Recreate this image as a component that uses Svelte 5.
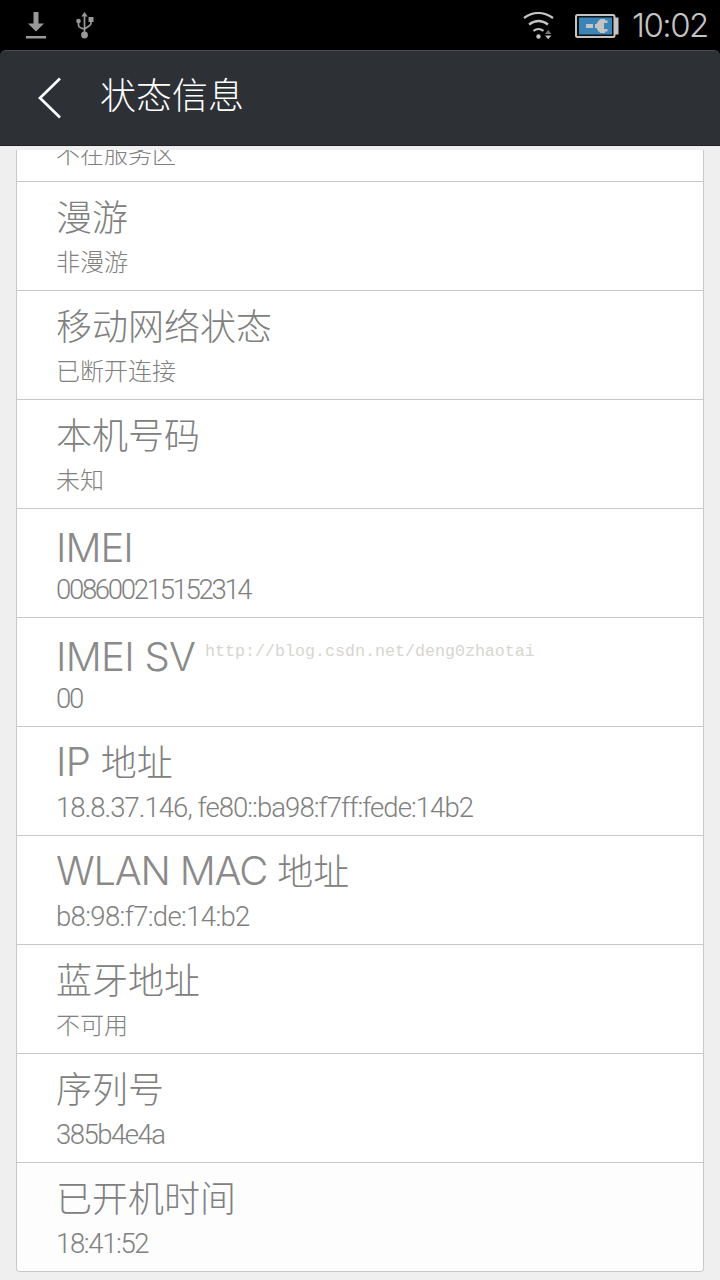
<script lang="ts">
  type Entry = {
    title: string;
    value: string;
    titleSpacing?: number;
    valueSpacing?: number;
  };

  const entries: Entry[] = [
    { title: "漫游", value: "非漫游" },
    { title: "移动网络状态", value: "已断开连接" },
    { title: "本机号码", value: "未知" },
    { title: "IMEI", value: "008600215152314", titleSpacing: -1, valueSpacing: -2.3 },
    { title: "IMEI SV", value: "00", titleSpacing: -0.7, valueSpacing: -2.3 },
    { title: "IP 地址", value: "18.8.37.146, fe80::ba98:f7ff:fede:14b2", titleSpacing: -0.7, valueSpacing: -0.94 },
    { title: "WLAN MAC 地址", value: "b8:98:f7:de:14:b2", titleSpacing: -1.2, valueSpacing: -0.65 },
    { title: "蓝牙地址", value: "不可用" },
    { title: "序列号", value: "385b4e4a", valueSpacing: -1.5 },
    { title: "已开机时间", value: "18:41:52", valueSpacing: -1.35 },
  ];

  // latin runs use a different face and size than the chinese ones
  function split(text: string) {
    return text.match(/[\x20-\x7e]+|[^\x20-\x7e]+/g) ?? [];
  }

  function isLatin(text: string) {
    return /^[\x20-\x7e]+$/.test(text);
  }
</script>

{#snippet runs(text: string, spacing: number)}
  {#each split(text) as part}
    {#if isLatin(part)}
      <span class="latin" style:letter-spacing="{spacing}px">{part}</span>
    {:else}
      <span>{part}</span>
    {/if}
  {/each}
{/snippet}

<div class="screen">
  <div class="statusbar">
    <svg class="download" width="22" height="28" viewBox="0 0 22 28">
      <path d="M8.500 0h5v11.500H19l-8 8-8-8h5.500z" fill="#999" />
      <path d="M1 24h20v2.500H1z" fill="#999" />
    </svg>
    <svg class="usb" width="20" height="28" viewBox="0 0 20 28" fill="none" stroke="#999" stroke-width="1.700">
      <path d="M9.500 3v19M3.500 9v4q0 2 2 2.700l4 1.500M16 8v3q0 2-2 3l-4.500 3" />
      <path d="M9.500 0l3.200 4.500H6.300z" fill="#999" stroke="none" />
      <circle cx="3.500" cy="9" r="2.300" fill="#999" stroke="none" />
      <path d="M13.500 5h5v5h-5z" fill="#999" stroke="none" />
      <circle cx="9.500" cy="23" r="3.400" fill="#999" stroke="none" />
    </svg>
    <span class="spacer"></span>
    <svg class="wifi" width="32" height="28" viewBox="0 0 32 28" fill="none" stroke="#c4c4c4" stroke-width="2.200">
      <path d="M1 6q14-10 29 0M6 12.500q9.500-7 19 0M10.500 18.800q5-3.600 10 0" />
      <circle cx="15.500" cy="24.500" r="2.200" fill="#c4c4c4" stroke="none" />
      <path d="M22 22l3.200-4 3.200 4z" fill="#777" stroke="none" />
      <path d="M22 23.500h6.400l-3.200 3.700z" fill="#c4c4c4" stroke="none" />
    </svg>
    <svg class="battery" width="44" height="24" viewBox="0 0 44 24">
      <rect x="1" y="1" width="38.500" height="22" rx="1.500" fill="#111" stroke="#c4c4c4" stroke-width="2" />
      <path d="M40 3.500h3.500v17H40z" fill="#c4c4c4" />
      <path d="M4 3.500h33v17H4z" fill="#3a84b8" />
      <path
        d="M11 10h7v4h-7zM20 10h1.500q1-3 4-5H30v1.500h2.500V9H29v6h3.500v2.500H30V19h-4.500q-3-2-4-5H20z"
        fill="#c4c4c4"
      />
    </svg>
    <span class="clock">10:02</span>
  </div>

  <header>
    <svg width="26" height="42" viewBox="0 0 26 42" fill="none" stroke="#fff" stroke-width="2.700">
      <path d="M23 1.500L3 21l20 19.500" />
    </svg>
    <h1>状态信息</h1>
  </header>

  <main>
    <div class="card">
      <div class="row cut"><p class="value">不在服务区</p></div>
      {#each entries as entry}
        <div class="row">
          <p class={["title", isLatin(entry.title) && "low"]}>
            {@render runs(entry.title, entry.titleSpacing ?? 0)}
          </p>
          <p class={["value", isLatin(entry.value) && "low"]}>
            {@render runs(entry.value, entry.valueSpacing ?? 0)}
          </p>
        </div>
      {/each}
    </div>
    <span class="watermark">http://blog.csdn.net/deng0zhaotai</span>
  </main>
</div>

<style>
  :global(body) {
    background: #000;
  }

  .screen {
    display: flex;
    flex-direction: column;
    width: 720px;
    height: 1280px;
    overflow: hidden;
    font-family: "Noto Sans CJK SC", sans-serif;
    font-weight: 300;
  }

  .statusbar {
    display: flex;
    flex: none;
    height: 50px;
    padding: 0 11px 0 25px;
    background: #000;
  }

  .statusbar svg {
    flex: none;
    margin-top: 12px;
  }

  .statusbar .usb {
    margin-left: 28px;
  }

  .statusbar .battery {
    margin: 14px 13px 0 20px;
  }

  .spacer {
    flex: 1;
  }

  .clock {
    width: 77px;
    font-family: Inter, sans-serif;
    font-size: 33px;
    line-height: 51px;
    letter-spacing: -1.5px;
    white-space: nowrap;
    color: #c4c4c4;
  }

  header {
    display: flex;
    flex: none;
    box-sizing: border-box;
    height: 96px;
    padding: 26px 0 0 37px;
    border-top: 1px solid #4a4d51;
    border-bottom: 1px solid #1e2024;
    border-radius: 6px 6px 0 0;
    background: #2d3035;
  }

  h1 {
    margin: -10px 0 0 37px;
    font-size: 36px;
    font-weight: 300;
    line-height: 52px;
    color: #fff;
  }

  main {
    position: relative;
    flex: 1;
    padding: 4px 16px 8px;
    background: #efefef;
  }

  .card {
    border: 1px solid #c8c8c8;
    border-top: 0;
    border-radius: 0 0 4px 4px;
    background: #fff;
  }

  .row {
    box-sizing: border-box;
    height: 109px;
    padding: 7px 0 0 39px;
    border-bottom: 1px solid #c8c8c8;
  }

  .row:last-child {
    height: 108px;
    border-bottom: 0;
    border-radius: 0 0 4px 4px;
    background: #fdfdfd;
  }

  .row.cut {
    display: flex;
    align-items: flex-end;
    height: 32px;
    padding-top: 0;
    padding-bottom: 10px;
    overflow: hidden;
  }

  p {
    display: flex;
    align-items: baseline;
    margin: 0;
    white-space: pre;
    color: #808080;
  }

  .title {
    height: 54px;
    font-size: 36px;
    line-height: 52px;
  }

  .title.low {
    padding-top: 6px;
    height: 48px;
  }

  .value {
    height: 36px;
    font-size: 24px;
    line-height: 36px;
  }

  .value.low {
    padding-top: 2px;
  }

  .latin {
    font-family: Inter, sans-serif;
  }

  .title .latin {
    font-size: 40px;
    color: #8a8a8a;
  }

  .value .latin {
    font-family: Roboto, sans-serif;
    font-size: 27.5px;
  }

  .watermark {
    position: absolute;
    top: 495px;
    left: 205px;
    font-family: "Liberation Mono", monospace;
    font-size: 16.66px;
    line-height: 22px;
    color: #d6d6cf;
  }
</style>
